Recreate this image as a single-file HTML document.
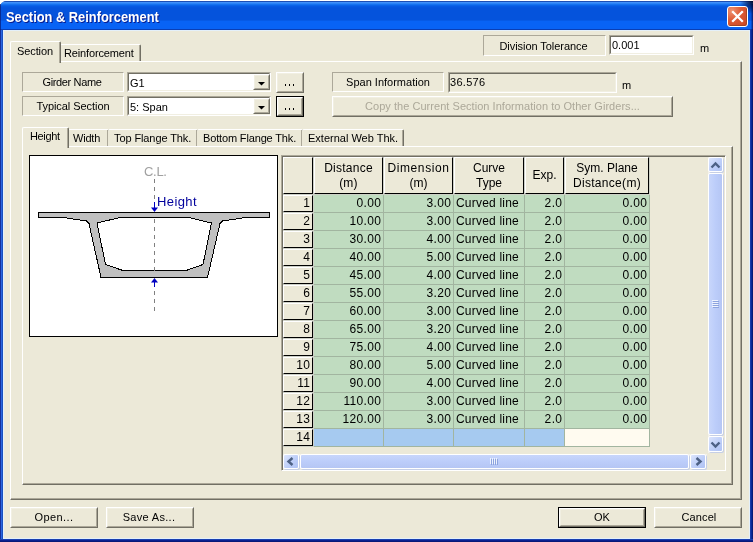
<!DOCTYPE html>
<html><head><meta charset="utf-8"><style>
*{box-sizing:border-box;margin:0;padding:0}
html,body{width:753px;height:542px;overflow:hidden;background:#fff}
body{position:relative;font-family:"Liberation Sans",sans-serif;font-size:11px;color:#000}
div{position:absolute}
.tb{left:0;top:1px;width:753px;height:29px;border-radius:6px 0 0 0;background:linear-gradient(to bottom,#1c4eb4 0.000%,#1c4eb4 3.448%,#3f90fa 3.448%,#3f90fa 6.897%,#2b82f6 6.897%,#2b82f6 10.345%,#1572ef 10.345%,#1572ef 13.793%,#0a63e8 13.793%,#0a63e8 17.241%,#0759e2 17.241%,#0759e2 20.690%,#0555de 20.690%,#0555de 24.138%,#0553dc 24.138%,#0553dc 27.586%,#0553dc 27.586%,#0553dc 31.034%,#0553dc 31.034%,#0553dc 34.483%,#0553dc 34.483%,#0553dc 37.931%,#0553dc 37.931%,#0553dc 41.379%,#0553dc 41.379%,#0553dc 44.828%,#0553dc 44.828%,#0553dc 48.276%,#0553dc 48.276%,#0553dc 51.724%,#0553dc 51.724%,#0553dc 55.172%,#0553dc 55.172%,#0553dc 58.621%,#0553dc 58.621%,#0553dc 62.069%,#0553dc 62.069%,#0553dc 65.517%,#065ae6 65.517%,#065ae6 68.966%,#0863f5 68.966%,#0863f5 72.414%,#0863f5 72.414%,#0863f5 75.862%,#0863f5 75.862%,#0863f5 79.310%,#0863f5 79.310%,#0863f5 82.759%,#0863f5 82.759%,#0863f5 86.207%,#0863f5 86.207%,#0863f5 89.655%,#0863f5 89.655%,#0863f5 93.103%,#0863f5 93.103%,#0863f5 96.552%,#0a3fb5 96.552%,#0a3fb5 100.000%)}
.tt{left:6px;top:9px;color:#fff;font-weight:bold;font-size:14px;text-shadow:1px 1px #0a1a8a;white-space:pre;line-height:16px;transform:scaleX(0.918);transform-origin:0 0}
.cls{left:727px;top:6px;width:21px;height:21px;border:1px solid #fff;border-radius:3px;
background:radial-gradient(circle at 20% 20%,#ee9272 0%,#de5c36 42%,#c9441f 100%);box-shadow:inset -1px -1px 0 #a84422}
.lbl{border-top:1px solid #aca899;border-left:1px solid #aca899;border-bottom:1px solid #fff;border-right:1px solid #fff;text-align:center;white-space:pre;line-height:17px}
.sk{border-top:1px solid #aca899;border-left:1px solid #aca899;border-bottom:1px solid #fff;border-right:1px solid #fff;background:#fff}
.ski{left:0;top:0;right:0;bottom:0;border-top:1px solid #716f64;border-left:1px solid #716f64;border-bottom:1px solid #f1efe2;border-right:1px solid #f1efe2}
.bt{background:#ece9d8;border-top:1px solid #fff;border-left:1px solid #fff;border-bottom:1px solid #716f64;border-right:1px solid #716f64;text-align:center;white-space:pre}
.bti{left:0;top:0;right:0;bottom:0;border-top:1px solid #f1efe2;border-left:1px solid #f1efe2;border-bottom:1px solid #aca899;border-right:1px solid #aca899}
.t{white-space:pre;line-height:13px}
.g{font-size:12px;line-height:14px;white-space:pre}
</style></head><body>
<div style="left:0;top:0;width:753px;height:542px;will-change:transform">
<div style="left:0;top:1px;width:753px;height:541px;background:#0a2a98;border-radius:7px 0 0 0"></div>
<div class="tb"></div>
<div style="left:0;top:4px;width:1px;height:26px;background:rgba(10,30,120,0.75)"></div>
<div style="left:751px;top:4px;width:1px;height:26px;background:rgba(0,10,80,0.25)"></div>
<div style="left:752px;top:4px;width:1px;height:26px;background:rgba(0,10,80,0.6)"></div>
<div class="tt">Section &amp; Reinforcement</div>
<div style="left:738px;top:1px;width:15px;height:14px;background:radial-gradient(circle at 100% 0%,rgba(0,0,30,0.95) 0px,rgba(0,10,60,0.6) 6px,rgba(0,20,90,0) 13px)"></div>
<div class="cls"><svg width="19" height="19" style="position:absolute;left:0;top:0"><path d="M4.2 4.2 L14.8 14.8 M14.8 4.2 L4.2 14.8" stroke="#fff" stroke-width="2.3"/></svg></div>
<div style="left:0px;top:30px;width:1px;height:512px;background:#15309a"></div>
<div style="left:1px;top:30px;width:1px;height:512px;background:#2a66e0"></div>
<div style="left:2px;top:30px;width:1px;height:512px;background:#1850c0"></div>
<div style="left:750px;top:30px;width:1px;height:512px;background:#1a3aa8"></div>
<div style="left:751px;top:30px;width:1px;height:512px;background:#0a2a98"></div>
<div style="left:752px;top:30px;width:1px;height:512px;background:#081a78"></div>
<div style="left:0;top:539px;width:753px;height:1px;background:#1a40b0"></div>
<div style="left:0;top:540px;width:753px;height:1px;background:#0a2090"></div>
<div style="left:0;top:541px;width:753px;height:1px;background:#081878"></div>
<div style="left:3px;top:30px;width:747px;height:509px;background:#e4f0fa"></div>
<div style="left:4px;top:31px;width:745px;height:507px;background:#ece9d8"></div>
<div class="lbl" style="left:483px;top:35px;width:123px;height:21px;"><span style="letter-spacing:-0.05px;position:relative;top:2px;left:-1px">Division Tolerance</span></div>
<div class="sk" style="left:609px;top:35px;width:85px;height:20px;background:#fff"><div class="ski"></div></div>
<div class="t" style="left:612px;top:39px;">0.001</div>
<div class="t" style="left:700px;top:42px;">m</div>
<div style="left:10px;top:61px;width:732px;height:439px;border-top:1px solid #fff;border-left:1px solid #fff;border-right:1px solid #716f64;border-bottom:1px solid #716f64"><div style="left:0;top:0;right:0;bottom:0;border-right:1px solid #aca899;border-bottom:1px solid #aca899"></div></div>
<div style="left:60px;top:44px;width:81px;height:17px;border-top:1px solid #fff;border-right:1px solid #716f64;background:#ece9d8;border-top-left-radius:2px;border-top-right-radius:2px"><div style="left:0;top:0;right:0;bottom:0;border-right:1px solid #aca899"></div></div>
<div class="t" style="left:64px;top:47px;letter-spacing:-0.15px">Reinforcement</div>
<div style="left:10px;top:41px;width:51px;height:22px;border-top:1px solid #fff;border-left:1px solid #fff;border-right:1px solid #716f64;background:#ece9d8;border-top-left-radius:2px;border-top-right-radius:2px"><div style="left:0;top:0;right:0;bottom:0;border-right:1px solid #aca899"></div></div>
<div class="t" style="left:17px;top:45px;letter-spacing:-0.1px">Section</div>
<div class="lbl" style="left:22px;top:72px;width:102px;height:20px;"><span style="letter-spacing:-0.35px;position:relative;top:1px;left:-1px">Girder Name</span></div>
<div class="lbl" style="left:22px;top:96px;width:102px;height:20px;"><span style="letter-spacing:-0.05px;position:relative;top:1px">Typical Section</span></div>
<div class="sk" style="left:127px;top:72px;width:144px;height:20px;background:#fff"><div class="ski"></div></div>
<div class="t" style="left:130px;top:77px;">G1</div>
<div class="bt" style="left:253px;top:74px;width:17px;height:16px"><div class="bti"></div><svg width="17" height="16" style="position:absolute;left:0;top:0"><path d="M4 7 L11 7 L7.5 10.5 Z" fill="#000"/></svg></div>
<div class="sk" style="left:127px;top:96px;width:144px;height:20px;background:#fff"><div class="ski"></div></div>
<div class="t" style="left:130px;top:101px;">5: Span</div>
<div class="bt" style="left:253px;top:98px;width:17px;height:16px"><div class="bti"></div><svg width="17" height="16" style="position:absolute;left:0;top:0"><path d="M4 7 L11 7 L7.5 10.5 Z" fill="#000"/></svg></div>
<div class="bt" style="left:276px;top:72px;width:28px;height:21px;"><div class="bti"></div></div>
<div style="left:276px;top:96px;width:28px;height:21px;border:1px solid #000"></div>
<div class="bt" style="left:277px;top:97px;width:26px;height:19px;"><div class="bti"></div></div>
<div style="left:285px;top:84px;width:1px;height:2px;background:#000"></div>
<div style="left:289px;top:84px;width:1px;height:2px;background:#000"></div>
<div style="left:293px;top:84px;width:1px;height:2px;background:#000"></div>
<div style="left:285px;top:108px;width:1px;height:2px;background:#000"></div>
<div style="left:289px;top:108px;width:1px;height:2px;background:#000"></div>
<div style="left:293px;top:108px;width:1px;height:2px;background:#000"></div>
<div class="lbl" style="left:332px;top:72px;width:112px;height:20px;"><span style="position:relative;top:1px">Span Information</span></div>
<div class="sk" style="left:448px;top:72px;width:169px;height:21px;background:#ece9d8"><div class="ski"></div></div>
<div class="t" style="left:450px;top:76px;letter-spacing:0.3px">36.576</div>
<div class="t" style="left:622px;top:79px;">m</div>
<div class="bt" style="left:332px;top:96px;width:341px;height:21px;"><div class="bti"></div><div class="t" style="left:0px;right:0px;top:3px;text-align:center;letter-spacing:0.04px;color:#aca899">Copy the Current Section Information to Other Girders...</div></div>
<div style="left:22px;top:146px;width:711px;height:339px;border-top:1px solid #fff;border-left:1px solid #fff;border-right:1px solid #716f64;border-bottom:1px solid #716f64"><div style="left:0;top:0;right:0;bottom:0;border-right:1px solid #aca899;border-bottom:1px solid #aca899"></div></div>
<div style="left:68px;top:129px;width:41px;height:17px;border-top:1px solid #fff;border-right:1px solid #716f64;background:#ece9d8;border-top-left-radius:2px;border-top-right-radius:2px"><div style="left:0;top:0;right:0;bottom:0;border-right:1px solid #aca899"></div></div>
<div class="t" style="left:73px;top:132px;letter-spacing:-0.2px">Width</div>
<div style="left:108px;top:129px;width:90px;height:17px;border-top:1px solid #fff;border-right:1px solid #716f64;background:#ece9d8;border-top-left-radius:2px;border-top-right-radius:2px"><div style="left:0;top:0;right:0;bottom:0;border-right:1px solid #aca899"></div></div>
<div class="t" style="left:114px;top:132px;letter-spacing:-0.1px">Top Flange Thk.</div>
<div style="left:197px;top:129px;width:106px;height:17px;border-top:1px solid #fff;border-right:1px solid #716f64;background:#ece9d8;border-top-left-radius:2px;border-top-right-radius:2px"><div style="left:0;top:0;right:0;bottom:0;border-right:1px solid #aca899"></div></div>
<div class="t" style="left:203px;top:132px;letter-spacing:-0.15px">Bottom Flange Thk.</div>
<div style="left:302px;top:129px;width:102px;height:17px;border-top:1px solid #fff;border-right:1px solid #716f64;background:#ece9d8;border-top-left-radius:2px;border-top-right-radius:2px"><div style="left:0;top:0;right:0;bottom:0;border-right:1px solid #aca899"></div></div>
<div class="t" style="left:308px;top:132px;letter-spacing:0px">External Web Thk.</div>
<div style="left:22px;top:127px;width:47px;height:21px;border-top:1px solid #fff;border-left:1px solid #fff;border-right:1px solid #716f64;background:#ece9d8;border-top-left-radius:2px;border-top-right-radius:2px"><div style="left:0;top:0;right:0;bottom:0;border-right:1px solid #aca899"></div></div>
<div class="t" style="left:30px;top:130px;letter-spacing:-0.35px">Height</div>
<div style="left:29px;top:155px;width:249px;height:182px;background:#fff;border:1px solid #000"></div>
<svg width="753" height="542" style="position:absolute;left:0;top:0"><path d="M38.5,212.5 38.5,217.5 63.5,217.5 86.5,221 89,223.5 101,277.5 207.5,277.5 220,223.5 222.5,221 245.5,217.5 269.5,217.5 269.5,212.5 Z M97,223 120,217.5 189,217.5 211.5,223 203,264.5 187.5,270 121.5,270 105.5,264.5 Z" fill="#c0c0c0" fill-rule="evenodd" stroke="#000" stroke-width="1" shape-rendering="crispEdges"/><path d="M154.5 179v4M154.5 187v4M154.5 195v4M154.5 203v0M154.5 219v4M154.5 227v4M154.5 235v4M154.5 243v4M154.5 251v4M154.5 259v4M154.5 267v4M154.5 291v4M154.5 299v4M154.5 307v4" stroke="#808080" stroke-width="1"/><line x1="154.5" y1="202" x2="154.5" y2="208" stroke="#0000c0" stroke-width="1"/><path d="M151 207.5 L158 207.5 L154.5 212 Z" fill="#0000c0"/><line x1="154.5" y1="281" x2="154.5" y2="287" stroke="#0000c0" stroke-width="1"/><path d="M151 282.5 L158 282.5 L154.5 278 Z" fill="#0000c0"/></svg>
<div class="t" style="left:144px;top:165px;font-size:13px;color:#a0a0a0;letter-spacing:-0.3px">C.L.</div>
<div class="t" style="left:157px;top:195px;font-size:13px;color:#00009c;letter-spacing:0.4px">Height</div>
<div style="left:281px;top:155px;width:445px;height:316px;border-top:1px solid #aca899;border-left:1px solid #aca899;border-right:1px solid #fff;border-bottom:1px solid #fff"><div style="left:0;top:0;right:0;bottom:0;border-top:1px solid #716f64;border-left:1px solid #716f64"></div></div>
<div style="left:283px;top:157px;width:367px;height:290px;background:#a2b5a0"></div>
<div style="left:283px;top:157px;width:367px;height:38px;background:#cdd0c6"></div>
<div style="left:283px;top:157px;width:31px;height:290px;background:#cdd0c6"></div>
<div style="left:283px;top:157px;width:30px;height:37px;background:#ece9d8;border-top:1px solid #fff;border-left:1px solid #fff;border-right:1px solid #000;border-bottom:1px solid #000"></div>
<div style="left:314px;top:157px;width:69px;height:37px;background:#ece9d8;border-top:1px solid #fff;border-left:1px solid #fff;border-right:1px solid #000;border-bottom:1px solid #000"></div>
<div class="g" style="left:314px;top:161px;width:69px;text-align:center;line-height:15px;letter-spacing:0.25px">Distance<br>(m)</div>
<div style="left:384px;top:157px;width:69px;height:37px;background:#ece9d8;border-top:1px solid #fff;border-left:1px solid #fff;border-right:1px solid #000;border-bottom:1px solid #000"></div>
<div class="g" style="left:384px;top:161px;width:69px;text-align:center;line-height:15px;letter-spacing:0px"><span style="letter-spacing:0.6px">Dimension</span><br>(m)</div>
<div style="left:454px;top:157px;width:70px;height:37px;background:#ece9d8;border-top:1px solid #fff;border-left:1px solid #fff;border-right:1px solid #000;border-bottom:1px solid #000"></div>
<div class="g" style="left:454px;top:161px;width:70px;text-align:center;line-height:15px;letter-spacing:0px">Curve<br>Type</div>
<div style="left:525px;top:157px;width:39px;height:37px;background:#ece9d8;border-top:1px solid #fff;border-left:1px solid #fff;border-right:1px solid #000;border-bottom:1px solid #000"></div>
<div class="g" style="left:525px;top:168px;width:39px;text-align:center">Exp.</div>
<div style="left:565px;top:157px;width:84px;height:37px;background:#ece9d8;border-top:1px solid #fff;border-left:1px solid #fff;border-right:1px solid #000;border-bottom:1px solid #000"></div>
<div class="g" style="left:565px;top:161px;width:84px;text-align:center;line-height:15px;letter-spacing:0px">Sym. Plane<br><span style="letter-spacing:0.3px">Distance(m)</span></div>
<div style="left:283px;top:195px;width:30px;height:17px;background:#ece9d8;border-top:1px solid #fff;border-left:1px solid #fff;border-right:1px solid #000;border-bottom:1px solid #000"></div>
<div class="g" style="left:283px;top:196px;width:27.4px;text-align:right;letter-spacing:0.4px">1</div>
<div style="left:314px;top:195px;width:69px;height:17px;background:#c0dcc0"></div>
<div class="g" style="left:314px;top:196px;width:67.35px;text-align:right;letter-spacing:0.35px">0.00</div>
<div style="left:384px;top:195px;width:69px;height:17px;background:#c0dcc0"></div>
<div class="g" style="left:384px;top:196px;width:67.35px;text-align:right;letter-spacing:0.35px">3.00</div>
<div style="left:454px;top:195px;width:70px;height:17px;background:#c0dcc0"></div>
<div class="g" style="left:456px;top:196px;letter-spacing:0.2px">Curved line</div>
<div style="left:525px;top:195px;width:39px;height:17px;background:#c0dcc0"></div>
<div class="g" style="left:525px;top:196px;width:37.35px;text-align:right;letter-spacing:0.35px">2.0</div>
<div style="left:565px;top:195px;width:84px;height:17px;background:#c0dcc0"></div>
<div class="g" style="left:565px;top:196px;width:82.35px;text-align:right;letter-spacing:0.35px">0.00</div>
<div style="left:283px;top:213px;width:30px;height:17px;background:#ece9d8;border-top:1px solid #fff;border-left:1px solid #fff;border-right:1px solid #000;border-bottom:1px solid #000"></div>
<div class="g" style="left:283px;top:214px;width:27.4px;text-align:right;letter-spacing:0.4px">2</div>
<div style="left:314px;top:213px;width:69px;height:17px;background:#c0dcc0"></div>
<div class="g" style="left:314px;top:214px;width:67.35px;text-align:right;letter-spacing:0.35px">10.00</div>
<div style="left:384px;top:213px;width:69px;height:17px;background:#c0dcc0"></div>
<div class="g" style="left:384px;top:214px;width:67.35px;text-align:right;letter-spacing:0.35px">3.00</div>
<div style="left:454px;top:213px;width:70px;height:17px;background:#c0dcc0"></div>
<div class="g" style="left:456px;top:214px;letter-spacing:0.2px">Curved line</div>
<div style="left:525px;top:213px;width:39px;height:17px;background:#c0dcc0"></div>
<div class="g" style="left:525px;top:214px;width:37.35px;text-align:right;letter-spacing:0.35px">2.0</div>
<div style="left:565px;top:213px;width:84px;height:17px;background:#c0dcc0"></div>
<div class="g" style="left:565px;top:214px;width:82.35px;text-align:right;letter-spacing:0.35px">0.00</div>
<div style="left:283px;top:231px;width:30px;height:17px;background:#ece9d8;border-top:1px solid #fff;border-left:1px solid #fff;border-right:1px solid #000;border-bottom:1px solid #000"></div>
<div class="g" style="left:283px;top:232px;width:27.4px;text-align:right;letter-spacing:0.4px">3</div>
<div style="left:314px;top:231px;width:69px;height:17px;background:#c0dcc0"></div>
<div class="g" style="left:314px;top:232px;width:67.35px;text-align:right;letter-spacing:0.35px">30.00</div>
<div style="left:384px;top:231px;width:69px;height:17px;background:#c0dcc0"></div>
<div class="g" style="left:384px;top:232px;width:67.35px;text-align:right;letter-spacing:0.35px">4.00</div>
<div style="left:454px;top:231px;width:70px;height:17px;background:#c0dcc0"></div>
<div class="g" style="left:456px;top:232px;letter-spacing:0.2px">Curved line</div>
<div style="left:525px;top:231px;width:39px;height:17px;background:#c0dcc0"></div>
<div class="g" style="left:525px;top:232px;width:37.35px;text-align:right;letter-spacing:0.35px">2.0</div>
<div style="left:565px;top:231px;width:84px;height:17px;background:#c0dcc0"></div>
<div class="g" style="left:565px;top:232px;width:82.35px;text-align:right;letter-spacing:0.35px">0.00</div>
<div style="left:283px;top:249px;width:30px;height:17px;background:#ece9d8;border-top:1px solid #fff;border-left:1px solid #fff;border-right:1px solid #000;border-bottom:1px solid #000"></div>
<div class="g" style="left:283px;top:250px;width:27.4px;text-align:right;letter-spacing:0.4px">4</div>
<div style="left:314px;top:249px;width:69px;height:17px;background:#c0dcc0"></div>
<div class="g" style="left:314px;top:250px;width:67.35px;text-align:right;letter-spacing:0.35px">40.00</div>
<div style="left:384px;top:249px;width:69px;height:17px;background:#c0dcc0"></div>
<div class="g" style="left:384px;top:250px;width:67.35px;text-align:right;letter-spacing:0.35px">5.00</div>
<div style="left:454px;top:249px;width:70px;height:17px;background:#c0dcc0"></div>
<div class="g" style="left:456px;top:250px;letter-spacing:0.2px">Curved line</div>
<div style="left:525px;top:249px;width:39px;height:17px;background:#c0dcc0"></div>
<div class="g" style="left:525px;top:250px;width:37.35px;text-align:right;letter-spacing:0.35px">2.0</div>
<div style="left:565px;top:249px;width:84px;height:17px;background:#c0dcc0"></div>
<div class="g" style="left:565px;top:250px;width:82.35px;text-align:right;letter-spacing:0.35px">0.00</div>
<div style="left:283px;top:267px;width:30px;height:17px;background:#ece9d8;border-top:1px solid #fff;border-left:1px solid #fff;border-right:1px solid #000;border-bottom:1px solid #000"></div>
<div class="g" style="left:283px;top:268px;width:27.4px;text-align:right;letter-spacing:0.4px">5</div>
<div style="left:314px;top:267px;width:69px;height:17px;background:#c0dcc0"></div>
<div class="g" style="left:314px;top:268px;width:67.35px;text-align:right;letter-spacing:0.35px">45.00</div>
<div style="left:384px;top:267px;width:69px;height:17px;background:#c0dcc0"></div>
<div class="g" style="left:384px;top:268px;width:67.35px;text-align:right;letter-spacing:0.35px">4.00</div>
<div style="left:454px;top:267px;width:70px;height:17px;background:#c0dcc0"></div>
<div class="g" style="left:456px;top:268px;letter-spacing:0.2px">Curved line</div>
<div style="left:525px;top:267px;width:39px;height:17px;background:#c0dcc0"></div>
<div class="g" style="left:525px;top:268px;width:37.35px;text-align:right;letter-spacing:0.35px">2.0</div>
<div style="left:565px;top:267px;width:84px;height:17px;background:#c0dcc0"></div>
<div class="g" style="left:565px;top:268px;width:82.35px;text-align:right;letter-spacing:0.35px">0.00</div>
<div style="left:283px;top:285px;width:30px;height:17px;background:#ece9d8;border-top:1px solid #fff;border-left:1px solid #fff;border-right:1px solid #000;border-bottom:1px solid #000"></div>
<div class="g" style="left:283px;top:286px;width:27.4px;text-align:right;letter-spacing:0.4px">6</div>
<div style="left:314px;top:285px;width:69px;height:17px;background:#c0dcc0"></div>
<div class="g" style="left:314px;top:286px;width:67.35px;text-align:right;letter-spacing:0.35px">55.00</div>
<div style="left:384px;top:285px;width:69px;height:17px;background:#c0dcc0"></div>
<div class="g" style="left:384px;top:286px;width:67.35px;text-align:right;letter-spacing:0.35px">3.20</div>
<div style="left:454px;top:285px;width:70px;height:17px;background:#c0dcc0"></div>
<div class="g" style="left:456px;top:286px;letter-spacing:0.2px">Curved line</div>
<div style="left:525px;top:285px;width:39px;height:17px;background:#c0dcc0"></div>
<div class="g" style="left:525px;top:286px;width:37.35px;text-align:right;letter-spacing:0.35px">2.0</div>
<div style="left:565px;top:285px;width:84px;height:17px;background:#c0dcc0"></div>
<div class="g" style="left:565px;top:286px;width:82.35px;text-align:right;letter-spacing:0.35px">0.00</div>
<div style="left:283px;top:303px;width:30px;height:17px;background:#ece9d8;border-top:1px solid #fff;border-left:1px solid #fff;border-right:1px solid #000;border-bottom:1px solid #000"></div>
<div class="g" style="left:283px;top:304px;width:27.4px;text-align:right;letter-spacing:0.4px">7</div>
<div style="left:314px;top:303px;width:69px;height:17px;background:#c0dcc0"></div>
<div class="g" style="left:314px;top:304px;width:67.35px;text-align:right;letter-spacing:0.35px">60.00</div>
<div style="left:384px;top:303px;width:69px;height:17px;background:#c0dcc0"></div>
<div class="g" style="left:384px;top:304px;width:67.35px;text-align:right;letter-spacing:0.35px">3.00</div>
<div style="left:454px;top:303px;width:70px;height:17px;background:#c0dcc0"></div>
<div class="g" style="left:456px;top:304px;letter-spacing:0.2px">Curved line</div>
<div style="left:525px;top:303px;width:39px;height:17px;background:#c0dcc0"></div>
<div class="g" style="left:525px;top:304px;width:37.35px;text-align:right;letter-spacing:0.35px">2.0</div>
<div style="left:565px;top:303px;width:84px;height:17px;background:#c0dcc0"></div>
<div class="g" style="left:565px;top:304px;width:82.35px;text-align:right;letter-spacing:0.35px">0.00</div>
<div style="left:283px;top:321px;width:30px;height:17px;background:#ece9d8;border-top:1px solid #fff;border-left:1px solid #fff;border-right:1px solid #000;border-bottom:1px solid #000"></div>
<div class="g" style="left:283px;top:322px;width:27.4px;text-align:right;letter-spacing:0.4px">8</div>
<div style="left:314px;top:321px;width:69px;height:17px;background:#c0dcc0"></div>
<div class="g" style="left:314px;top:322px;width:67.35px;text-align:right;letter-spacing:0.35px">65.00</div>
<div style="left:384px;top:321px;width:69px;height:17px;background:#c0dcc0"></div>
<div class="g" style="left:384px;top:322px;width:67.35px;text-align:right;letter-spacing:0.35px">3.20</div>
<div style="left:454px;top:321px;width:70px;height:17px;background:#c0dcc0"></div>
<div class="g" style="left:456px;top:322px;letter-spacing:0.2px">Curved line</div>
<div style="left:525px;top:321px;width:39px;height:17px;background:#c0dcc0"></div>
<div class="g" style="left:525px;top:322px;width:37.35px;text-align:right;letter-spacing:0.35px">2.0</div>
<div style="left:565px;top:321px;width:84px;height:17px;background:#c0dcc0"></div>
<div class="g" style="left:565px;top:322px;width:82.35px;text-align:right;letter-spacing:0.35px">0.00</div>
<div style="left:283px;top:339px;width:30px;height:17px;background:#ece9d8;border-top:1px solid #fff;border-left:1px solid #fff;border-right:1px solid #000;border-bottom:1px solid #000"></div>
<div class="g" style="left:283px;top:340px;width:27.4px;text-align:right;letter-spacing:0.4px">9</div>
<div style="left:314px;top:339px;width:69px;height:17px;background:#c0dcc0"></div>
<div class="g" style="left:314px;top:340px;width:67.35px;text-align:right;letter-spacing:0.35px">75.00</div>
<div style="left:384px;top:339px;width:69px;height:17px;background:#c0dcc0"></div>
<div class="g" style="left:384px;top:340px;width:67.35px;text-align:right;letter-spacing:0.35px">4.00</div>
<div style="left:454px;top:339px;width:70px;height:17px;background:#c0dcc0"></div>
<div class="g" style="left:456px;top:340px;letter-spacing:0.2px">Curved line</div>
<div style="left:525px;top:339px;width:39px;height:17px;background:#c0dcc0"></div>
<div class="g" style="left:525px;top:340px;width:37.35px;text-align:right;letter-spacing:0.35px">2.0</div>
<div style="left:565px;top:339px;width:84px;height:17px;background:#c0dcc0"></div>
<div class="g" style="left:565px;top:340px;width:82.35px;text-align:right;letter-spacing:0.35px">0.00</div>
<div style="left:283px;top:357px;width:30px;height:17px;background:#ece9d8;border-top:1px solid #fff;border-left:1px solid #fff;border-right:1px solid #000;border-bottom:1px solid #000"></div>
<div class="g" style="left:283px;top:358px;width:27.4px;text-align:right;letter-spacing:0.4px">10</div>
<div style="left:314px;top:357px;width:69px;height:17px;background:#c0dcc0"></div>
<div class="g" style="left:314px;top:358px;width:67.35px;text-align:right;letter-spacing:0.35px">80.00</div>
<div style="left:384px;top:357px;width:69px;height:17px;background:#c0dcc0"></div>
<div class="g" style="left:384px;top:358px;width:67.35px;text-align:right;letter-spacing:0.35px">5.00</div>
<div style="left:454px;top:357px;width:70px;height:17px;background:#c0dcc0"></div>
<div class="g" style="left:456px;top:358px;letter-spacing:0.2px">Curved line</div>
<div style="left:525px;top:357px;width:39px;height:17px;background:#c0dcc0"></div>
<div class="g" style="left:525px;top:358px;width:37.35px;text-align:right;letter-spacing:0.35px">2.0</div>
<div style="left:565px;top:357px;width:84px;height:17px;background:#c0dcc0"></div>
<div class="g" style="left:565px;top:358px;width:82.35px;text-align:right;letter-spacing:0.35px">0.00</div>
<div style="left:283px;top:375px;width:30px;height:17px;background:#ece9d8;border-top:1px solid #fff;border-left:1px solid #fff;border-right:1px solid #000;border-bottom:1px solid #000"></div>
<div class="g" style="left:283px;top:376px;width:27.4px;text-align:right;letter-spacing:0.4px">11</div>
<div style="left:314px;top:375px;width:69px;height:17px;background:#c0dcc0"></div>
<div class="g" style="left:314px;top:376px;width:67.35px;text-align:right;letter-spacing:0.35px">90.00</div>
<div style="left:384px;top:375px;width:69px;height:17px;background:#c0dcc0"></div>
<div class="g" style="left:384px;top:376px;width:67.35px;text-align:right;letter-spacing:0.35px">4.00</div>
<div style="left:454px;top:375px;width:70px;height:17px;background:#c0dcc0"></div>
<div class="g" style="left:456px;top:376px;letter-spacing:0.2px">Curved line</div>
<div style="left:525px;top:375px;width:39px;height:17px;background:#c0dcc0"></div>
<div class="g" style="left:525px;top:376px;width:37.35px;text-align:right;letter-spacing:0.35px">2.0</div>
<div style="left:565px;top:375px;width:84px;height:17px;background:#c0dcc0"></div>
<div class="g" style="left:565px;top:376px;width:82.35px;text-align:right;letter-spacing:0.35px">0.00</div>
<div style="left:283px;top:393px;width:30px;height:17px;background:#ece9d8;border-top:1px solid #fff;border-left:1px solid #fff;border-right:1px solid #000;border-bottom:1px solid #000"></div>
<div class="g" style="left:283px;top:394px;width:27.4px;text-align:right;letter-spacing:0.4px">12</div>
<div style="left:314px;top:393px;width:69px;height:17px;background:#c0dcc0"></div>
<div class="g" style="left:314px;top:394px;width:67.35px;text-align:right;letter-spacing:0.35px">110.00</div>
<div style="left:384px;top:393px;width:69px;height:17px;background:#c0dcc0"></div>
<div class="g" style="left:384px;top:394px;width:67.35px;text-align:right;letter-spacing:0.35px">3.00</div>
<div style="left:454px;top:393px;width:70px;height:17px;background:#c0dcc0"></div>
<div class="g" style="left:456px;top:394px;letter-spacing:0.2px">Curved line</div>
<div style="left:525px;top:393px;width:39px;height:17px;background:#c0dcc0"></div>
<div class="g" style="left:525px;top:394px;width:37.35px;text-align:right;letter-spacing:0.35px">2.0</div>
<div style="left:565px;top:393px;width:84px;height:17px;background:#c0dcc0"></div>
<div class="g" style="left:565px;top:394px;width:82.35px;text-align:right;letter-spacing:0.35px">0.00</div>
<div style="left:283px;top:411px;width:30px;height:17px;background:#ece9d8;border-top:1px solid #fff;border-left:1px solid #fff;border-right:1px solid #000;border-bottom:1px solid #000"></div>
<div class="g" style="left:283px;top:412px;width:27.4px;text-align:right;letter-spacing:0.4px">13</div>
<div style="left:314px;top:411px;width:69px;height:17px;background:#c0dcc0"></div>
<div class="g" style="left:314px;top:412px;width:67.35px;text-align:right;letter-spacing:0.35px">120.00</div>
<div style="left:384px;top:411px;width:69px;height:17px;background:#c0dcc0"></div>
<div class="g" style="left:384px;top:412px;width:67.35px;text-align:right;letter-spacing:0.35px">3.00</div>
<div style="left:454px;top:411px;width:70px;height:17px;background:#c0dcc0"></div>
<div class="g" style="left:456px;top:412px;letter-spacing:0.2px">Curved line</div>
<div style="left:525px;top:411px;width:39px;height:17px;background:#c0dcc0"></div>
<div class="g" style="left:525px;top:412px;width:37.35px;text-align:right;letter-spacing:0.35px">2.0</div>
<div style="left:565px;top:411px;width:84px;height:17px;background:#c0dcc0"></div>
<div class="g" style="left:565px;top:412px;width:82.35px;text-align:right;letter-spacing:0.35px">0.00</div>
<div style="left:283px;top:429px;width:30px;height:17px;background:#ece9d8;border-top:1px solid #fff;border-left:1px solid #fff;border-right:1px solid #000;border-bottom:1px solid #000"></div>
<div class="g" style="left:283px;top:430px;width:27.4px;text-align:right;letter-spacing:0.4px">14</div>
<div style="left:314px;top:429px;width:69px;height:17px;background:#a6caf0"></div>
<div style="left:384px;top:429px;width:69px;height:17px;background:#a6caf0"></div>
<div style="left:454px;top:429px;width:70px;height:17px;background:#a6caf0"></div>
<div style="left:525px;top:429px;width:39px;height:17px;background:#a6caf0"></div>
<div style="left:565px;top:429px;width:84px;height:17px;background:#fffbf0"></div>
<div style="left:708px;top:157px;width:15px;height:296px;background:#f3f2ec"></div>
<div style="left:708px;top:157px;width:15px;height:15px;border:1px solid #fff;border-radius:2px;background:linear-gradient(135deg,#dce5fd,#bccdf8 60%,#b0c3f4);box-shadow:1px 1px 0 #c6cfe6"><svg width="13" height="13" style="position:absolute;left:0;top:0"><path d="M2.5 9.5 L6.5 5.5 L10.5 9.5" fill="none" stroke="#4d6185" stroke-width="2.4"/></svg></div>
<div style="left:708px;top:173px;width:15px;height:262px;border:1px solid #fff;border-radius:2px;background:linear-gradient(to right,#c8d6fb,#bccdfa 50%,#b5c6f4);box-shadow:1px 1px 0 #c6cfe6"><svg width="13" height="260" style="position:absolute;left:0;top:0"><path d="M3 126.5h6M3 128.5h6M3 130.5h6M3 132.5h6" stroke="#eef3fe" stroke-width="1"/><path d="M4 127.5h6M4 129.5h6M4 131.5h6M4 133.5h6" stroke="#8ca3de" stroke-width="1"/></svg></div>
<div style="left:708px;top:436px;width:15px;height:16px;border:1px solid #fff;border-radius:2px;background:linear-gradient(135deg,#dce5fd,#bccdf8 60%,#b0c3f4);box-shadow:1px 1px 0 #c6cfe6"><svg width="13" height="14" style="position:absolute;left:0;top:0"><path d="M2.5 5.5 L6.5 9.5 L10.5 5.5" fill="none" stroke="#4d6185" stroke-width="2.4"/></svg></div>
<div style="left:283px;top:454px;width:424px;height:15px;background:#f3f2ec"></div>
<div style="left:283px;top:454px;width:16px;height:15px;border:1px solid #fff;border-radius:2px;background:linear-gradient(135deg,#dce5fd,#bccdf8 60%,#b0c3f4);box-shadow:1px 1px 0 #c6cfe6"><svg width="14" height="13" style="position:absolute;left:0;top:0"><path d="M8.5 3 L4.5 6.5 L8.5 10" fill="none" stroke="#4d6185" stroke-width="2.4"/></svg></div>
<div style="left:300px;top:454px;width:389px;height:15px;border:1px solid #fff;border-radius:2px;background:linear-gradient(to bottom,#c8d6fb,#bccdfa 50%,#b5c6f4);box-shadow:1px 1px 0 #c6cfe6"><svg width="387" height="13" style="position:absolute;left:0;top:0"><path d="M189.5 3v6M191.5 3v6M193.5 3v6M195.5 3v6" stroke="#eef3fe" stroke-width="1"/><path d="M190.5 4v6M192.5 4v6M194.5 4v6M196.5 4v6" stroke="#8ca3de" stroke-width="1"/></svg></div>
<div style="left:690px;top:454px;width:16px;height:15px;border:1px solid #fff;border-radius:2px;background:linear-gradient(135deg,#dce5fd,#bccdf8 60%,#b0c3f4);box-shadow:1px 1px 0 #c6cfe6"><svg width="14" height="13" style="position:absolute;left:0;top:0"><path d="M5.5 3 L9.5 6.5 L5.5 10" fill="none" stroke="#4d6185" stroke-width="2.4"/></svg></div>
<div class="bt" style="left:10px;top:507px;width:88px;height:21px;"><div class="bti"></div><div class="t" style="left:0px;right:0px;top:3px;text-align:center;letter-spacing:0.4px;color:#000">Open...</div></div>
<div class="bt" style="left:106px;top:507px;width:88px;height:21px;"><div class="bti"></div><div class="t" style="left:-1px;right:1px;top:3px;text-align:center;letter-spacing:0.3px;color:#000">Save As...</div></div>
<div style="left:558px;top:507px;width:88px;height:21px;border:1px solid #000"></div>
<div class="bt" style="left:559px;top:508px;width:86px;height:19px;"><div class="bti"></div><div class="t" style="left:0px;right:0px;top:2px;text-align:center;letter-spacing:0px;color:#000">OK</div></div>
<div class="bt" style="left:654px;top:507px;width:88px;height:21px;"><div class="bti"></div><div class="t" style="left:1px;right:-1px;top:3px;text-align:center;letter-spacing:0.1px;color:#000">Cancel</div></div>
</div></body></html>
